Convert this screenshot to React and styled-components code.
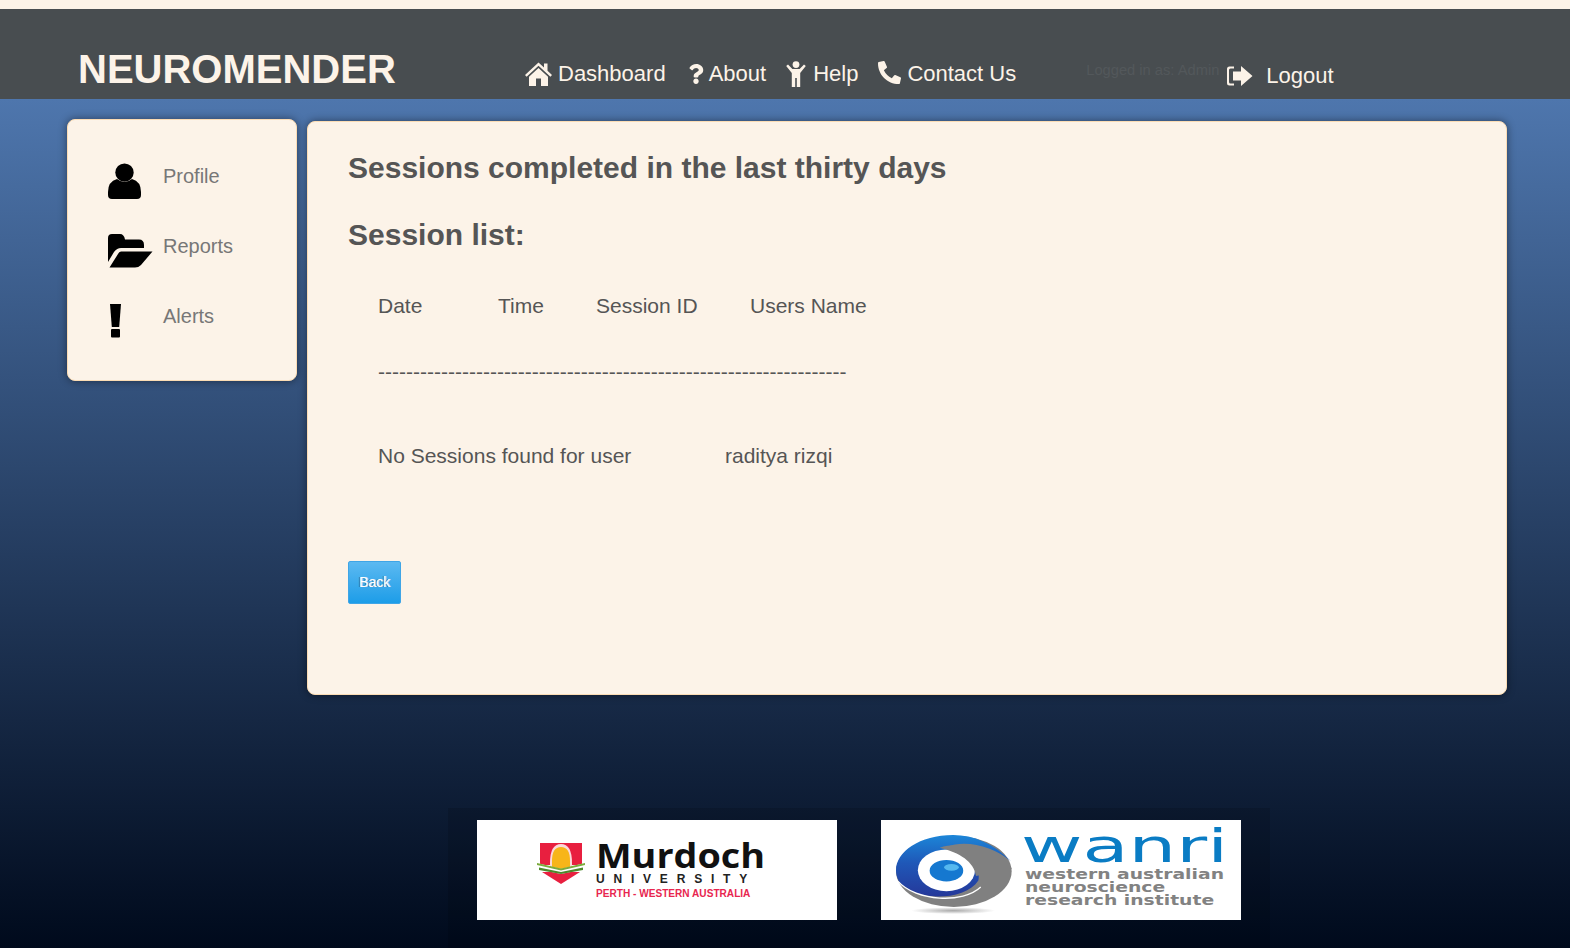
import styled, { createGlobalStyle } from 'styled-components';
import { FaPhoneAlt, FaQuestion } from 'react-icons/fa';

const GlobalStyle = createGlobalStyle`
  html, body {
    margin: 0;
    padding: 0;
  }
  body {
    font-family: "Liberation Sans", Arial, sans-serif;
    background: #000a1c;
  }
`;

const Page = styled.div`
  width: 1570px;
  height: 948px;
  overflow: hidden;
  background: linear-gradient(to bottom, #4e76ad 99px, #000a1c 948px);
`;

const TopStripe = styled.div`
  height: 9px;
  background: #fcf3e8;
`;

const Header = styled.header`
  height: 90px;
  box-sizing: border-box;
  padding-left: 78px;
  background: #484d50;
  display: flex;
  align-items: flex-start;
  color: #fcf3e8;
`;

const Brand = styled.div`
  width: 447px;
  margin-top: 37px;
  font-size: 40px;
  line-height: 46px;
  font-weight: bold;
`;

const Nav = styled.nav`
  display: flex;
  align-items: center;
  gap: 20px;
  margin-top: 52px;
  height: 26px;
`;

const NavItem = styled.a`
  display: flex;
  align-items: center;
  gap: ${(p) => p.$gap || 5}px;
  font-size: 22px;
  line-height: 26px;
  color: #fcf3e8;
  white-space: nowrap;
`;

const PhoneIcon = styled(FaPhoneAlt)`
  transform: translateY(-2px);
`;

const LoggedIn = styled.span`
  margin: 50px 0 0 70px;
  width: 140px;
  font-size: 14.7px;
  line-height: 22px;
  color: #53585b;
  white-space: nowrap;
`;

const Logout = styled(NavItem)`
  margin-top: 54px;
  gap: 13px;
`;

const ContentRow = styled.div`
  display: flex;
  align-items: flex-start;
  gap: 10px;
  padding-left: 67px;
`;

const Card = styled.div`
  box-sizing: border-box;
  background: #fcf3e8;
  border: 1px solid #fbdcb4;
  border-radius: 8px;
  box-shadow: 0 0 9px rgba(0, 0, 0, 0.45);
`;

const Sidebar = styled(Card)`
  width: 230px;
  height: 262px;
  margin-top: 20px;
  padding: 21px 0 0 40px;
`;

const SideItem = styled.a`
  display: flex;
  align-items: center;
  height: 70px;
  font-size: 20px;
  color: #777;
`;

const SideIcon = styled.span`
  display: flex;
  width: 55px;
  margin-top: 10px;
`;

const Main = styled(Card)`
  width: 1200px;
  height: 574px;
  margin-top: 22px;
  padding: 28px 0 0 40px;
  color: #555;
`;

const Heading = styled.h2`
  margin: 0 0 31px;
  font-size: 30px;
  line-height: 36px;
  font-weight: bold;
  color: #555;
`;

const SessionRow = styled.div`
  display: grid;
  grid-template-columns: ${(p) => p.$columns};
  margin-top: ${(p) => p.$top}px;
  padding-left: 30px;
  font-size: 21px;
  line-height: 24px;
`;

const BackButton = styled.button`
  display: block;
  width: 53px;
  height: 43px;
  margin-top: 93px;
  padding: 0 0 1px;
  border: 1px solid #3fa5e6;
  border-radius: 2px;
  background: linear-gradient(to bottom, #5cb9f1, #1d9de8);
  color: #fff;
  font-family: inherit;
  font-size: 14px;
  font-weight: normal;
  text-shadow: -1px 0 0 rgba(20, 60, 100, 0.55), 1px 0 0 rgba(255, 255, 255, 0.6);
`;

const Footer = styled.footer`
  display: flex;
  gap: 44px;
  width: 822px;
  box-sizing: border-box;
  margin: 113px 0 0 448px;
  padding: 12px 29px 30px;
  background: rgba(0, 0, 0, 0.12);
`;

const LogoCard = styled.div`
  display: flex;
  align-items: flex-start;
  width: 360px;
  height: 100px;
  box-sizing: border-box;
  background: #fff;
  padding: ${(p) => p.$padding};
  gap: ${(p) => p.$gap}px;
`;

const MurdochText = styled.div`
  display: flex;
  flex-direction: column;
`;

const MurdochName = styled.div`
  height: 30px;
  font-family: "Open Sans", sans-serif;
  font-size: 34px;
  line-height: 24px;
  font-weight: 700;
  color: #111;
  transform: scaleX(1.11);
  transform-origin: left top;
`;

const MurdochUni = styled.div`
  font-size: 12px;
  line-height: 13px;
  font-weight: bold;
  letter-spacing: 8.8px;
  color: #222;
  white-space: nowrap;
`;

const MurdochPlace = styled.div`
  margin-top: 2px;
  font-size: 10.1px;
  line-height: 12px;
  font-weight: bold;
  color: #e8264f;
  white-space: nowrap;
`;

const WanriText = styled.div`
  display: flex;
  flex-direction: column;
`;

const WanriName = styled.div`
  height: 43px;
  margin-left: -4px;
  font-family: "DejaVu Sans", sans-serif;
  font-size: 47px;
  line-height: 42px;
  color: #0a7cc4;
  white-space: nowrap;
  transform: scaleX(1.6);
  transform-origin: left top;
`;

const WanriLine = styled.div`
  font-family: "DejaVu Sans", sans-serif;
  font-size: 14px;
  line-height: 13px;
  font-weight: bold;
  color: #828282;
  white-space: nowrap;
  transform: scaleX(1.34);
  transform-origin: left top;
`;

const SwirlBox = styled.div`
  display: flex;
  margin-top: 10px;
`;

const HomeIcon = () => (
  <svg width="27" height="24" viewBox="0 0 27 24" fill="currentColor">
    <path d="M13.5 0.5 L19 5.6 V1.5 H22.5 V8.8 L27 13 L25.4 14.8 L13.5 3.8 L1.6 14.8 L0 13 Z" />
    <path d="M13.5 6 L23 14.8 V24 H16 V16.5 H11 V24 H4 V14.8 Z" />
  </svg>
);

const ChildIcon = () => (
  <svg width="20" height="26" viewBox="0 0 20 26" fill="currentColor">
    <circle cx="10" cy="3.6" r="3.4" />
    <path d="M0.2 5 L2 3.6 L6.4 8 H13.6 L18 3.6 L19.8 5 L14.2 12 V26 H10.8 V17 H9.2 V26 H5.8 V12 Z" />
  </svg>
);

const LogoutIcon = () => (
  <svg width="27" height="22" viewBox="0 0 27 22" fill="currentColor">
    <path d="M8 1.5 H3.5 Q1 1.5 1 4 V18 Q1 20.5 3.5 20.5 H8 V18.5 H4.5 Q3 18.5 3 17 V5 Q3 3.5 4.5 3.5 H8 Z" />
    <path d="M7 6.5 H15 V1 L26.5 11 L15 21 V15.5 H7 Z" />
  </svg>
);

const UserIcon = () => (
  <svg width="33" height="36" viewBox="0 0 33 36" fill="#000">
    <circle cx="16.5" cy="9.6" r="9.2" />
    <path d="M9 16 Q16.5 22 24 16 Q33 18.5 33 29 V32 Q33 36 29 36 H4 Q0 36 0 32 V29 Q0 18.5 9 16 Z" />
  </svg>
);

const FolderIcon = () => (
  <svg width="45" height="34" viewBox="0 0 45 34" fill="#000">
    <path d="M0 4 Q0 0 4 0 H12 Q16 0 17 5.5 H31 Q36 5.5 36 11 V14 H13 Q9 14 6 18 L0 28 Z" />
    <path d="M13 17.5 H44.5 L33 31 Q30.5 33.5 27 33.5 H1.5 L10 20 Q11 17.5 13 17.5 Z" />
  </svg>
);

const AlertIcon = () => (
  <svg width="14" height="34" viewBox="-2 0 14 34" fill="#000">
    <path d="M0 0 H11 L9.2 23 H1.8 Z" />
    <rect x="1" y="25" width="9" height="8.5" rx="1" />
  </svg>
);

const MurdochShield = () => (
  <svg width="48" height="41" viewBox="0 0 48 41">
    <path d="M3 0 H45 V22 H3 Z" fill="#e81f3f" />
    <path d="M5 29 H43 L24 41 Z" fill="#e81f3f" />
    <path d="M13 20 Q13 1 24 1 Q35 1 35 20 V26 H13 Z" fill="#fbd9d9" />
    <path d="M15 18 Q15 4 24 4 Q33 4 33 18 V26 H15 Z" fill="#f7b519" />
    <path d="M0 20 L24 26 L48 20 V26 L24 31 L0 26 Z" fill="#fff" />
    <path d="M0 20 L24 25.5 L48 20 V22 L24 27.5 L0 22 Z" fill="#7bab3c" />
    <path d="M2 24.5 L24 29 L46 24.5 V27 L24 31 L2 27 Z" fill="#4d8a2c" />
  </svg>
);

const WanriSwirl = () => (
  <svg width="116" height="79" viewBox="0 0 345 235">
    <defs>
      <linearGradient id="swirlBlue" x1="0" y1="0" x2="0" y2="1">
        <stop offset="0" stopColor="#1c86d8" />
        <stop offset="0.45" stopColor="#1f58b8" />
        <stop offset="1" stopColor="#25389a" />
      </linearGradient>
      <radialGradient id="swirlShadow">
        <stop offset="0" stopColor="#aaa" />
        <stop offset="1" stopColor="#fff" />
      </radialGradient>
    </defs>
    <ellipse cx="170" cy="225" rx="125" ry="10" fill="url(#swirlShadow)" />
    <ellipse cx="172" cy="108" rx="172" ry="106" fill="#808080" />
    <path d="M342 78 C290 25 230 0 170 0 C70 0 0 50 0 105 C0 125 10 145 25 155 C75 195 205 195 245 135 C250 115 240 100 230 100 L150 35 C210 12 290 35 342 78 Z" fill="url(#swirlBlue)" />
    <path d="M6 138 C60 198 200 205 252 155" fill="none" stroke="#fff" strokeWidth="4" />
    <ellipse cx="150" cy="105" rx="85" ry="62" fill="#fff" />
    <path d="M130 38 C190 18 290 40 345 100 L238 122 C232 80 190 52 130 38 Z" fill="#808080" />
    <ellipse cx="150" cy="106" rx="50" ry="32" fill="#1578d0" />
    <ellipse cx="165" cy="96" rx="22" ry="10" fill="#55b8ef" />
  </svg>
);

const App = () => {
  return (
    <Page>
      <GlobalStyle />
      <TopStripe />
      <Header>
        <Brand>NEUROMENDER</Brand>
        <Nav>
          <NavItem $gap={6}><HomeIcon />Dashboard</NavItem>
          <NavItem $gap={3}><FaQuestion size={20} />About</NavItem>
          <NavItem $gap={7}><ChildIcon />Help</NavItem>
          <NavItem $gap={6}><PhoneIcon size={23} />Contact Us</NavItem>
        </Nav>
        <LoggedIn>Logged in as: Admin</LoggedIn>
        <Logout><LogoutIcon />Logout</Logout>
      </Header>
      <ContentRow>
        <Sidebar>
          <SideItem><SideIcon><UserIcon /></SideIcon>Profile</SideItem>
          <SideItem><SideIcon><FolderIcon /></SideIcon>Reports</SideItem>
          <SideItem><SideIcon><AlertIcon /></SideIcon>Alerts</SideItem>
        </Sidebar>
        <Main>
          <Heading>Sessions completed in the last thirty days</Heading>
          <Heading>Session list:</Heading>
          <SessionRow $columns="120px 98px 154px auto" $top={41}>
            <span>Date</span>
            <span>Time</span>
            <span>Session ID</span>
            <span>Users Name</span>
          </SessionRow>
          <SessionRow $columns="auto" $top={42}>
            <span>-------------------------------------------------------------------</span>
          </SessionRow>
          <SessionRow $columns="347px auto" $top={60}>
            <span>No Sessions found for user</span>
            <span>raditya rizqi</span>
          </SessionRow>
          <BackButton>Back</BackButton>
        </Main>
      </ContentRow>
      <Footer>
        <LogoCard $padding="23px 0 0 60px" $gap={11}>
          <MurdochShield />
          <MurdochText>
            <MurdochName>Murdoch</MurdochName>
            <MurdochUni>UNIVERSITY</MurdochUni>
            <MurdochPlace>PERTH - WESTERN AUSTRALIA</MurdochPlace>
          </MurdochText>
        </LogoCard>
        <LogoCard $padding="5px 0 0 15px" $gap={13}>
          <SwirlBox><WanriSwirl /></SwirlBox>
          <WanriText>
            <WanriName>wanri</WanriName>
            <WanriLine>western australian</WanriLine>
            <WanriLine>neuroscience</WanriLine>
            <WanriLine>research institute</WanriLine>
          </WanriText>
        </LogoCard>
      </Footer>
    </Page>
  );
};

export default App;
